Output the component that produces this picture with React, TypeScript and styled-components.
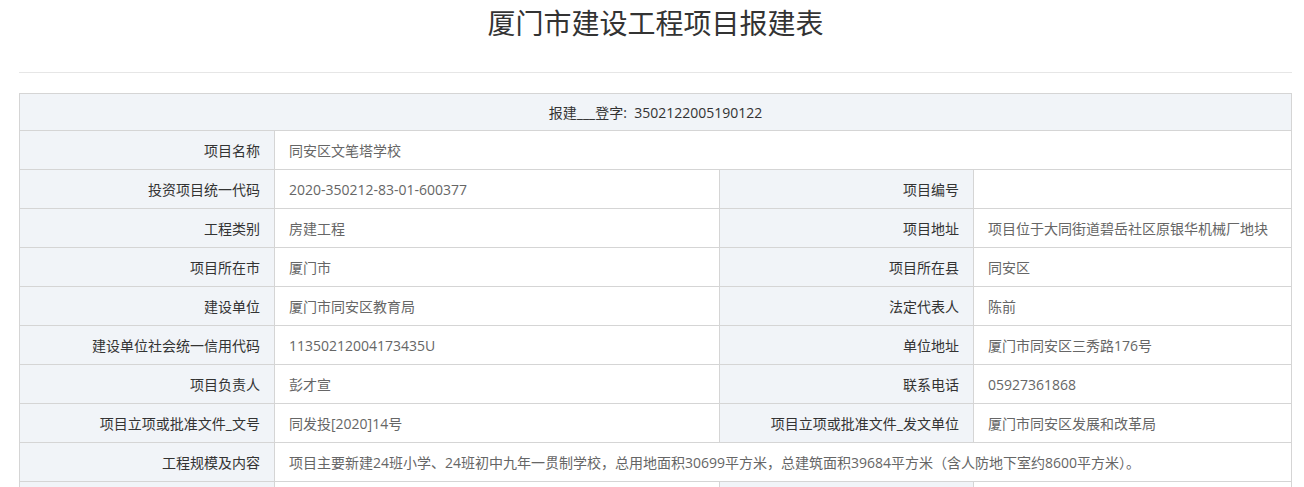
import styled, { createGlobalStyle } from 'styled-components'

const GlobalStyle = createGlobalStyle`
  body {
    margin: 0;
    background: #fff;
    font-family: "Open Sans", "Noto Sans CJK SC", sans-serif;
  }
`

const Page = styled.div`
  width: 1273px;
  margin-left: 19px;
`

const Title = styled.h1`
  margin: 0;
  height: 44px;
  line-height: 44px;
  text-align: center;
  font-size: 28px;
  font-weight: normal;
  color: #333;
  font-family: "Noto Sans CJK SC", sans-serif;
`

const Divider = styled.hr`
  margin: 28px 0 20px;
  border: 0;
  border-top: 1px solid #e6e6e6;
  height: 0;
`

const Table = styled.table`
  width: 100%;
  table-layout: fixed;
  border-collapse: collapse;
  border: 1px solid #d5d5d5;
  font-size: 14px;
`

const HeadCell = styled.th`
  height: 36px;
  background: #f1f4f8;
  border: 1px solid #d5d5d5;
  color: #333;
  font-weight: normal;
  text-align: center;
  padding: 0;
`

const Label = styled.td`
  height: 38px;
  background: #f1f4f8;
  border: 1px solid #d5d5d5;
  color: #333;
  text-align: right;
  padding: 0 14px;
  white-space: nowrap;
`

const Value = styled.td`
  height: 38px;
  border: 1px solid #d5d5d5;
  color: #666;
  text-align: left;
  padding: 0 14px;
  white-space: nowrap;
`

type Pair = [string, string]

const rows: (Pair | [Pair, Pair])[] = [
  ['项目名称', '同安区文笔塔学校'],
  [['投资项目统一代码', '2020-350212-83-01-600377'], ['项目编号', '']],
  [['工程类别', '房建工程'], ['项目地址', '项目位于大同街道碧岳社区原银华机械厂地块']],
  [['项目所在市', '厦门市'], ['项目所在县', '同安区']],
  [['建设单位', '厦门市同安区教育局'], ['法定代表人', '陈前']],
  [['建设单位社会统一信用代码', '11350212004173435U'], ['单位地址', '厦门市同安区三秀路176号']],
  [['项目负责人', '彭才宣'], ['联系电话', '05927361868']],
  [['项目立项或批准文件_文号', '同发投[2020]14号'], ['项目立项或批准文件_发文单位', '厦门市同安区发展和改革局']],
  ['工程规模及内容', '项目主要新建24班小学、24班初中九年一贯制学校，总用地面积30699平方米，总建筑面积39684平方米（含人防地下室约8600平方米）。'],
  [['', ''], ['', '']],
]

export default function App() {
  return (
    <Page>
      <GlobalStyle />
      <Title>厦门市建设工程项目报建表</Title>
      <Divider />
      <Table>
        <colgroup>
          <col style={{ width: 255 }} />
          <col style={{ width: 445 }} />
          <col style={{ width: 254 }} />
          <col />
        </colgroup>
        <thead>
          <tr>
            <HeadCell colSpan={4}>报建___登字:&nbsp; 3502122005190122</HeadCell>
          </tr>
        </thead>
        <tbody>
          {rows.map((row, i) =>
            typeof row[0] === 'string' ? (
              <tr key={i}>
                <Label>{row[0] as string}</Label>
                <Value colSpan={3}>{row[1] as string}</Value>
              </tr>
            ) : (
              <tr key={i}>
                <Label>{(row as [Pair, Pair])[0][0]}</Label>
                <Value>{(row as [Pair, Pair])[0][1]}</Value>
                <Label>{(row as [Pair, Pair])[1][0]}</Label>
                <Value>{(row as [Pair, Pair])[1][1]}</Value>
              </tr>
            )
          )}
        </tbody>
      </Table>
    </Page>
  )
}
